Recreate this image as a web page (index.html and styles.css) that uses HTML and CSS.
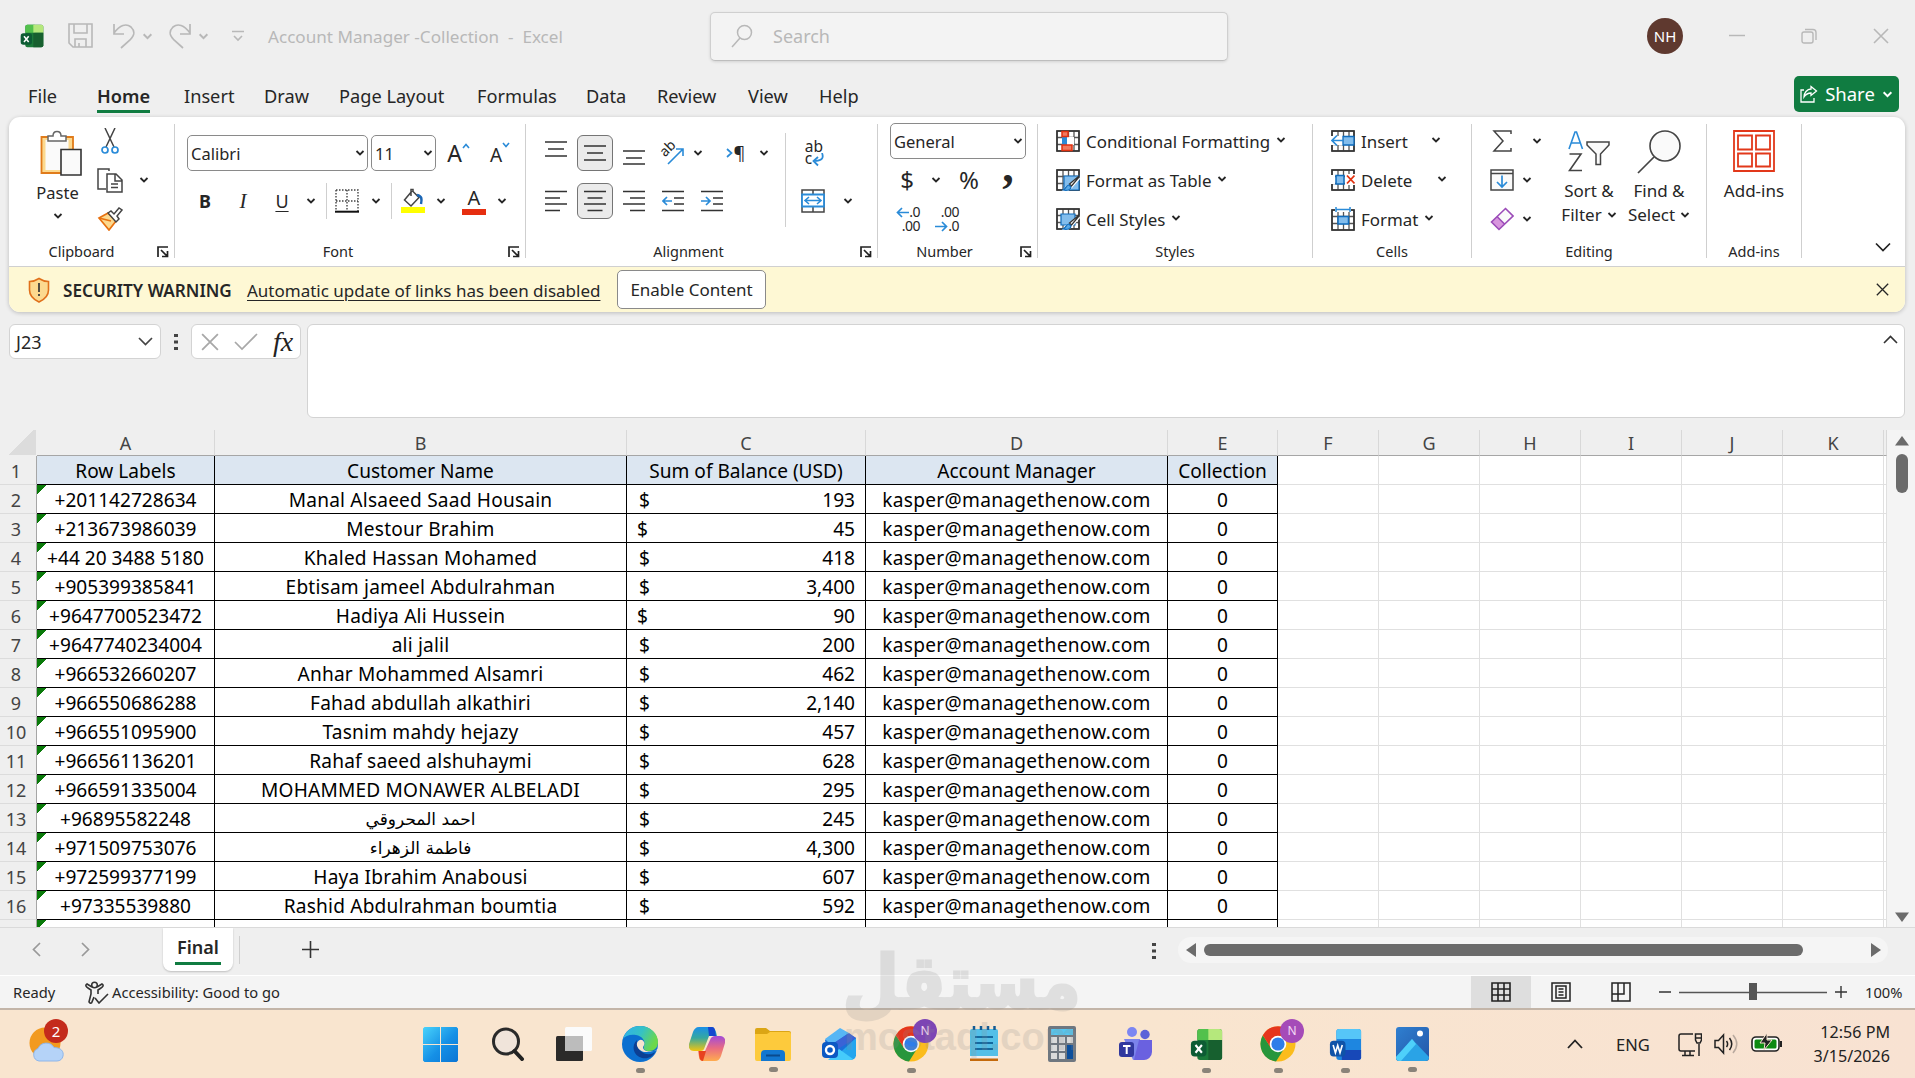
FILE: index.html
```html
<!DOCTYPE html>
<html lang="en">
<head>
    <meta charset="UTF-8">
    <meta name="viewport" content="width=device-width, initial-scale=1.0">
    <title>Account Manager -Collection - Excel</title>
    <link rel="stylesheet" href="styles.css">
</head>
<body>
    <!-- Shared icon shapes -->
    <svg class="defs" width="0" height="0">
        <defs>
            <symbol id="chev" viewBox="0 0 10 8"><path d="M1.5 2 5 5.5 8.5 2" fill="none" stroke="currentColor" stroke-width="1.8"/></symbol>
            <symbol id="launch" viewBox="0 0 12 12"><path d="M1 11V1h10M4 4l6 6M10.5 5v5.5H5" fill="none" stroke="#222" stroke-width="1.7"/></symbol>
            <symbol id="cross" viewBox="0 0 16 16"><path d="M1 1l14 14M15 1 1 15" fill="none" stroke="currentColor" stroke-width="1.6"/></symbol>
            <symbol id="grid" viewBox="0 0 24 22"><path d="M1 1h22v20H1zM1 7.5h22M1 14.5h22M7 1v20M12.5 1v20M18 1v20" fill="#fff" stroke="#555" stroke-width="1.3"/><path d="M1 1h22v20H1z" fill="none" stroke="#333" stroke-width="1.6"/></symbol>
            <symbol id="brush" viewBox="0 0 24 22"><path d="M23 7 13 16l-3 1-4 5h6l4-3 8-9z" fill="#fff"/><path d="M22.500 7.500 13.500 15l2 2 7.500-9z" fill="#fff" stroke="#333" stroke-width="1.300"/><path d="M13 16c-3 0-3 4-6 5 4 1 8 0 8-3z" fill="#5aa9e6" stroke="#0f6cbd" stroke-width="1.200"/></symbol>
            <linearGradient id="winG" x1="0" y1="0" x2="1" y2="1"><stop offset="0" stop-color="#49d3fb"/><stop offset=".55" stop-color="#1590e6"/><stop offset="1" stop-color="#0b74d4"/></linearGradient>
            <linearGradient id="edgeG" x1="0" y1="0" x2="1" y2=".4"><stop offset="0" stop-color="#2fb0ee"/><stop offset=".55" stop-color="#36c2c4"/><stop offset="1" stop-color="#6cd84a"/></linearGradient>
            <linearGradient id="copA" x1="0" y1="0" x2="0" y2="1"><stop offset="0" stop-color="#1a8fe8"/><stop offset=".45" stop-color="#35a8a0"/><stop offset="1" stop-color="#f3c50f"/></linearGradient>
            <linearGradient id="copB" x1="0" y1="0" x2="0" y2="1"><stop offset="0" stop-color="#a24ad8"/><stop offset=".5" stop-color="#ea6d80"/><stop offset="1" stop-color="#ffac4e"/></linearGradient>
            <linearGradient id="phG" x1="0" y1="0" x2="1" y2="1"><stop offset="0" stop-color="#2f7fd0"/><stop offset="1" stop-color="#2357a8"/></linearGradient>
            <symbol id="excel" viewBox="0 0 36 36">
                <rect x="8" y="1" width="27" height="34" rx="3" fill="#1b7a3a"/>
                <path d="M8 4a3 3 0 0 1 3-3h11v12H8z" fill="#52c14c"/>
                <path d="M20 1h12a3 3 0 0 1 3 3v9H20z" fill="#b5e87c"/>
                <path d="M20 13h15v19a3 3 0 0 1-3 3H20z" fill="#17602f"/>
                <rect x="1" y="14" width="17" height="17" rx="4" fill="#0d5c34"/>
                <path d="M6 18.500l7 8.500M13 18.500l-7 8.500" stroke="#fff" stroke-width="2.300"/>
            </symbol>
            <symbol id="chrome" viewBox="0 0 36 36">
                <circle cx="18" cy="18" r="17.500" fill="#fbbc1c"/>
                <path d="M2.800 9.200A17.500 17.500 0 0 0 16 35.400L24.500 22 11 22z" fill="#27963c"/>
                <path d="M2.800 9.200A17.500 17.500 0 0 1 33.200 9.200L18 10 11 22z" fill="#e5351d"/>
                <circle cx="18" cy="18" r="8.300" fill="#fff"/><circle cx="18" cy="18" r="6.600" fill="#2f7de9"/>
            </symbol>
        </defs>
    </svg>

    <header class="titlebar">
        <svg class="app-logo" width="24" height="24"><use href="#excel"/></svg>
        <svg class="t-save" width="26" height="26" viewBox="0 0 26 26"><path d="M1 1h23v23H5l-4-4zM6 1v9h13V1M7 24v-8h11v8M11 20v4" fill="none" stroke="currentColor" stroke-width="1.600"/></svg>
        <svg class="t-undo" width="24" height="26" viewBox="0 0 24 26"><path d="M2 1v10h10M2 10C8 2 14 0 19 4c5 5 3 9-1 13l-9 8" fill="none" stroke="currentColor" stroke-width="1.700"/></svg>
        <svg class="t-chev" width="11" height="9"><use href="#chev"/></svg>
        <svg class="t-redo" width="24" height="26" viewBox="0 0 24 26"><path d="M22 1v10H12M22 10C16 2 10 0 5 4c-5 5-3 9 1 13l9 8" fill="none" stroke="currentColor" stroke-width="1.700"/></svg>
        <svg class="t-chev" width="11" height="9"><use href="#chev"/></svg>
        <svg class="t-more" width="12" height="12" viewBox="0 0 12 12"><path d="M0 1.500h12M2 6l4 4 4-4" fill="none" stroke="currentColor" stroke-width="1.600"/></svg>
        <span class="doc-name">Account Manager -Collection&nbsp; -&nbsp; Excel</span>
        <div class="search">
            <svg width="22" height="24" viewBox="0 0 22 24"><circle cx="13.500" cy="8.500" r="7" fill="none" stroke="currentColor" stroke-width="1.500"/><path d="M9 14 1 23" stroke="currentColor" stroke-width="1.500"/></svg>
            <span>Search</span>
        </div>
        <div class="avatar">NH</div>
        <svg class="win-min" width="16" height="16" viewBox="0 0 16 16"><path d="M0 7.500h16" stroke="currentColor" stroke-width="1.500"/></svg>
        <svg class="win-max" width="16" height="16" viewBox="0 0 16 16"><rect x="1" y="4" width="11" height="11" rx="2" fill="none" stroke="currentColor" stroke-width="1.400"/><path d="M4 1.500h8a3 3 0 0 1 3 3V12" fill="none" stroke="currentColor" stroke-width="1.400"/></svg>
        <svg class="win-close" width="16" height="16"><use href="#cross"/></svg>
    </header>

    <nav class="tabs">
        <span>File</span><span class="active"><b>Home</b></span><span>Insert</span><span>Draw</span><span>Page Layout</span><span>Formulas</span><span>Data</span><span>Review</span><span>View</span><span>Help</span>
        <button class="share">
            <svg width="18" height="18" viewBox="0 0 18 18"><path d="M4 5H1v12h13v-4M11 1.500l5.500 4.500L11 10.500V8C8 8 6 9 4 12c0-4 3-8 7-8z" fill="none" stroke="#fff" stroke-width="1.300"/></svg>
            Share
            <svg width="11" height="9"><use href="#chev"/></svg>
        </button>
    </nav>

    <section class="panel">
        <div class="ribbon">
            <div class="group g-clipboard">
                <div class="body">
                    <div class="paste">
                        <svg width="42" height="46" viewBox="0 0 42 46"><path d="M1.500 7H33v36H1.500z" fill="#fcd98f" stroke="#e07b1a" stroke-width="1.800"/><path d="M5.500 10h23v30h-23z" fill="#fafafa"/><path d="M8 11V6h5c0-6 8-6 8 0h5v5z" fill="#fff" stroke="#666" stroke-width="1.500"/><path d="M21 19.500h20v25.500H21z" fill="#fafafa" stroke="#333" stroke-width="1.600"/></svg>
                        <span>Paste</span>
                        <svg width="10" height="8"><use href="#chev"/></svg>
                    </div>
                    <div class="clip-icons">
                        <svg width="18" height="26" viewBox="0 0 18 26"><path d="M4 0l9 19M14 0 5 19" stroke="#444" stroke-width="1.500"/><circle cx="4" cy="22" r="3" fill="none" stroke="#2a8bd8" stroke-width="1.700"/><circle cx="14" cy="22" r="3" fill="none" stroke="#2a8bd8" stroke-width="1.700"/></svg>
                        <svg width="26" height="25" viewBox="0 0 26 25"><path d="M12 3V1H1v20h8" fill="none" stroke="#444" stroke-width="1.500"/><path d="M10 6h9l6 6v12H10zM18 6v7h7M14 16h7M14 19.500h7" fill="none" stroke="#444" stroke-width="1.500"/></svg>
                        <svg width="10" height="8"><use href="#chev"/></svg>
                        <svg width="26" height="24" viewBox="0 0 26 24"><path d="M2 11 12 23l7-9-8-8z" fill="#fcd98f" stroke="#e8710f" stroke-width="1.700"/><path d="M2 11l12 3" stroke="#e8710f" stroke-width="1.500"/><path d="M11 6l3-2 3 3 5-6 3 2-5 6 2 3-3 3z" fill="#fff" stroke="#444" stroke-width="1.500"/></svg>
                    </div>
                </div>
                <div class="label">Clipboard</div><svg class="launcher" width="12" height="12"><use href="#launch"/></svg>
            </div>

            <div class="group g-font">
                <div class="body two-row">
                    <div class="row font-top">
                        <div class="combo">Calibri<svg width="10" height="8"><use href="#chev"/></svg></div>
                        <div class="combo">11<svg width="10" height="8"><use href="#chev"/></svg></div>
                        <span class="grow">A<svg width="8" height="6" viewBox="0 0 8 6"><path d="M1 5l3-3.500L7 5" fill="none" stroke="#2a8bd8" stroke-width="1.600"/></svg></span>
                        <span class="shrink">A<svg width="8" height="6" viewBox="0 0 8 6"><path d="M1 1l3 3.500L7 1" fill="none" stroke="#2a8bd8" stroke-width="1.600"/></svg></span>
                    </div>
                    <div class="row font-bottom">
                        <b>B</b><i>I</i><u>U</u>
                        <svg width="10" height="8"><use href="#chev"/></svg>
                        <span class="vsep"></span>
                        <svg width="24" height="24" viewBox="0 0 24 24"><path d="M1 1h22v21M1 1v21M12 1v21M1 12h22" fill="none" stroke="#444" stroke-width="1.400" stroke-dasharray="1.500 1.500"/><path d="M0 22.700h24" stroke="#111" stroke-width="2"/></svg>
                        <svg width="10" height="8"><use href="#chev"/></svg>
                        <span class="vsep"></span>
                        <svg width="26" height="26" viewBox="0 0 26 26"><path d="M12 3 4.500 12l6.500 6 8-8.500-6-6V1.500h-2V8" fill="none" stroke="#444" stroke-width="1.500"/><path d="M17 7c5 1 5 4 4 9" fill="none" stroke="#1b66b5" stroke-width="2.500"/><path d="M1 19h24v6H1z" fill="#ff0"/></svg>
                        <svg width="10" height="8"><use href="#chev"/></svg>
                        <span class="font-color">A</span>
                        <svg width="10" height="8"><use href="#chev"/></svg>
                    </div>
                </div>
                <div class="label">Font</div><svg class="launcher" width="12" height="12"><use href="#launch"/></svg>
            </div>

            <div class="group g-align">
                <div class="body">
                    <div class="align-left two-row">
                        <div class="row al-top">
                            <svg width="22" height="24" viewBox="0 0 22 24"><path d="M0 1h22M3 8h16M0 15h22" stroke="#333" stroke-width="1.600"/></svg>
                            <span class="pressed"><svg width="22" height="24" viewBox="0 0 22 24"><path d="M0 5h22M3 12h16M0 19h22" stroke="#333" stroke-width="1.600"/></svg></span>
                            <svg width="22" height="24" viewBox="0 0 22 24"><path d="M0 10h22M3 17h16M0 23h22" stroke="#333" stroke-width="1.600"/></svg>
                            <span class="orient"><span>ab</span><svg width="18" height="18" viewBox="0 0 18 18"><path d="M1 17 16 2M9 2h7v7" fill="none" stroke="#2a8bd8" stroke-width="1.600"/></svg></span>
                            <svg width="10" height="8"><use href="#chev"/></svg>
                            <span class="pilcrow"><svg width="7" height="10" viewBox="0 0 7 10"><path d="M1 1l4.500 4L1 9" fill="none" stroke="#2a8bd8" stroke-width="1.700"/></svg>¶</span>
                            <svg width="10" height="8"><use href="#chev"/></svg>
                        </div>
                        <div class="row al-bottom">
                            <svg width="22" height="22" viewBox="0 0 22 22"><path d="M0 1.500h22M0 8h15M0 14h22M0 20.500h15" stroke="#333" stroke-width="1.600"/></svg>
                            <span class="pressed"><svg width="22" height="22" viewBox="0 0 22 22"><path d="M0 1.500h22M3.500 8h15M0 14h22M3.500 20.500h15" stroke="#333" stroke-width="1.600"/></svg></span>
                            <svg width="22" height="22" viewBox="0 0 22 22"><path d="M0 1.500h22M7 8h15M0 14h22M7 20.500h15" stroke="#333" stroke-width="1.600"/></svg>
                            <svg width="22" height="22" viewBox="0 0 22 22"><path d="M0 1.500h22M12 8h10M12 14h10M0 20.500h22" stroke="#333" stroke-width="1.600"/><path d="M10 11H1M5 7l-4 4 4 4" fill="none" stroke="#2a8bd8" stroke-width="1.700"/></svg>
                            <svg width="22" height="22" viewBox="0 0 22 22"><path d="M0 1.500h22M12 8h10M12 14h10M0 20.500h22" stroke="#333" stroke-width="1.600"/><path d="M0 11h9M5 7l4 4-4 4" fill="none" stroke="#2a8bd8" stroke-width="1.700"/></svg>
                        </div>
                    </div>
                    <div class="align-right two-row">
                        <div class="row"><span class="wrap-text">ab<br>c<svg width="12" height="14" viewBox="0 0 12 14"><path d="M10 0c2 5 0 8-8 8M6 4 1.500 8 6 12.500" fill="none" stroke="#2a8bd8" stroke-width="1.800"/></svg></span></div>
                        <div class="row">
                            <svg width="24" height="24" viewBox="0 0 24 24"><path d="M1 1h22v22H1zM12 1v22" fill="#fff" stroke="#444" stroke-width="1.500"/><path d="M1 5.500h22v12H1z" fill="#fff" stroke="#2a8bd8" stroke-width="1.800"/><path d="M4 11.500h16M8 8l-4 3.500L8 15M16 8l4 3.500-4 3.500" fill="none" stroke="#2a8bd8" stroke-width="1.600"/></svg>
                            <svg width="10" height="8"><use href="#chev"/></svg>
                        </div>
                    </div>
                </div>
                <div class="label">Alignment</div><svg class="launcher" width="12" height="12"><use href="#launch"/></svg>
            </div>

            <div class="group g-number">
                <div class="body three-row">
                    <div class="combo">General<svg width="10" height="8"><use href="#chev"/></svg></div>
                    <div class="row num-mid"><span>$</span><svg width="10" height="8"><use href="#chev"/></svg><span>%</span><span class="comma">,</span></div>
                    <div class="row num-dec">
                        <span class="dec"><span><svg width="13" height="11" viewBox="0 0 13 11"><path d="M13 5.500H1.500M6 1 1.500 5.500 6 10" fill="none" stroke="#2a8bd8" stroke-width="1.700"/></svg>.0</span><span>.00</span></span>
                        <span class="dec"><span>.00</span><span><svg width="13" height="11" viewBox="0 0 13 11"><path d="M0 5.500h11.500M7 1l4.500 4.500L7 10" fill="none" stroke="#2a8bd8" stroke-width="1.700"/></svg>.0</span></span>
                    </div>
                </div>
                <div class="label">Number</div><svg class="launcher" width="12" height="12"><use href="#launch"/></svg>
            </div>

            <div class="group g-styles">
                <div class="body three-row">
                    <div class="cmd"><svg width="24" height="22" viewBox="0 0 24 22"><use href="#grid" width="24" height="22"/><path d="M6 7h5v8H6z" fill="#2a8bd8"/><path d="M11 7h7v8h-7z" fill="#fff"/><path d="M6 1.500h6v5H6zM6 15h10v5.500H6z" fill="#f07a5f" stroke="#e2310f" stroke-width="1.500"/></svg>Conditional Formatting<svg width="10" height="8"><use href="#chev"/></svg></div>
                    <div class="cmd"><svg width="24" height="22" viewBox="0 0 24 22"><use href="#grid" width="24" height="22"/><path d="M8 7h15v14H8z" fill="#83bdec" stroke="#0f6cbd" stroke-width="1.200"/><use href="#brush" width="24" height="22"/></svg>Format as Table<svg width="10" height="8"><use href="#chev"/></svg></div>
                    <div class="cmd"><svg width="24" height="22" viewBox="0 0 24 22"><use href="#grid" width="24" height="22"/><path d="M5 6h14v11H5z" fill="#83bdec" stroke="#0f6cbd" stroke-width="1.200"/><use href="#brush" width="24" height="22"/></svg>Cell Styles<svg width="10" height="8"><use href="#chev"/></svg></div>
                </div>
                <div class="label">Styles</div>
            </div>

            <div class="group g-cells">
                <div class="body three-row">
                    <div class="cmd"><svg width="24" height="22" viewBox="0 0 24 22"><use href="#grid" width="24" height="22"/><path d="M0 6h12v9H0z" fill="#fff"/><path d="M12 6.500h11v8.500H12z" fill="#83bdec" stroke="#0f6cbd" stroke-width="1.300"/><path d="M12 10.500H1.500M6 5.500l-5 5 5 5" fill="none" stroke="#2a8bd8" stroke-width="1.700"/></svg><span class="ins">Insert</span><svg width="10" height="8"><use href="#chev"/></svg></div>
                    <div class="cmd"><svg width="24" height="22" viewBox="0 0 24 22"><use href="#grid" width="24" height="22"/><path d="M0 6h4v9H0zM14 5h10v11H14z" fill="#fff"/><path d="M5 6.500h8v8.500H5z" fill="#83bdec" stroke="#0f6cbd" stroke-width="1.500"/><path d="M16 6.500l7.500 8M23.500 6.500l-7.500 8" stroke="#e2310f" stroke-width="1.800"/></svg><span class="del">Delete</span><svg width="10" height="8"><use href="#chev"/></svg></div>
                    <div class="cmd"><svg width="24" height="24" viewBox="0 0 24 24"><use href="#grid" y="2" width="24" height="22"/><path d="M4 0h16v5H4z" fill="#fff"/><path d="M5 2.500h14M5 0v5M19 0v5" fill="none" stroke="#2a8bd8" stroke-width="1.500"/><path d="M7 9.500h10.500v7.500H7z" fill="#83bdec" stroke="#0f6cbd" stroke-width="1.500"/></svg>Format<svg width="10" height="8"><use href="#chev"/></svg></div>
                </div>
                <div class="label">Cells</div>
            </div>

            <div class="group g-editing">
                <div class="body">
                    <div class="edit-icons three-row">
                        <div><svg width="24" height="22" viewBox="0 0 24 22"><path d="M21 4V1H4l9 10-9 10h17v-3" fill="none" stroke="#444" stroke-width="1.500"/></svg><svg class="far" width="10" height="8"><use href="#chev"/></svg></div>
                        <div><svg width="24" height="22" viewBox="0 0 24 22"><path d="M1 1h22v20H1zM1 4.500h22" fill="#fafafa" stroke="#444" stroke-width="1.500"/><path d="M12 6.500v11M7 13l5 5 5-5" fill="none" stroke="#2a8bd8" stroke-width="1.700"/></svg><svg width="10" height="8"><use href="#chev"/></svg></div>
                        <div><svg width="24" height="24" viewBox="0 0 24 24"><path d="M15.500 1.500 23 9 9 22.500 1.500 15z" fill="#fafafa"/><path d="M7 9.500 14.500 17 9 22.500 1.500 15z" fill="#d896de"/><path d="M15.500 1.500 23 9 9 22.500 1.500 15zM7 9.500l7.500 7.500" fill="none" stroke="#9b4bb8" stroke-width="1.600"/></svg><svg width="10" height="8"><use href="#chev"/></svg></div>
                    </div>
                    <div class="big sort">
                        <svg width="42" height="46" viewBox="0 0 42 46"><path d="M1 19 7 2h1.500L14.500 19M3.500 13h8.500" fill="none" stroke="#2a8bd8" stroke-width="1.600"/><path d="M1.500 24H13L1.500 40.500H14" fill="none" stroke="#444" stroke-width="1.600"/><path d="M19 12h22v3l-8.500 9v10.500H28V24l-9-9z" fill="#fafafa" stroke="#444" stroke-width="1.500"/></svg>
                        <span>Sort &amp;</span><span>Filter <svg width="10" height="8"><use href="#chev"/></svg></span>
                    </div>
                    <div class="big find">
                        <svg width="44" height="46" viewBox="0 0 44 46"><circle cx="28" cy="16" r="15" fill="#fafafa" stroke="#444" stroke-width="1.600"/><path d="M17 27 1 43" stroke="#444" stroke-width="1.700"/></svg>
                        <span>Find &amp;</span><span>Select <svg width="10" height="8"><use href="#chev"/></svg></span>
                    </div>
                </div>
                <div class="label">Editing</div>
            </div>

            <div class="group g-addins">
                <div class="body">
                    <div class="big">
                        <svg width="42" height="46" viewBox="0 0 42 46"><path d="M1 1h40v40H1zM5 5.500h14v14H5zM23 5.500h14v14H23zM5 23.500h14v13H5zM23 23.500h14v13H23z" fill="#fff" stroke="#e2381a" stroke-width="1.800"/></svg>
                        <span>Add-ins</span>
                    </div>
                </div>
                <div class="label">Add-ins</div>
            </div>

            <svg class="collapse" width="16" height="10" viewBox="0 0 16 10"><path d="M1 1.500 8 8.500l7-7" fill="none" stroke="#222" stroke-width="1.700"/></svg>
        </div>

        <div class="warning">
            <svg width="22" height="26" viewBox="0 0 22 26"><path d="M11 1.500c3 2 6 3 9.500 3V13c0 6-4 9.500-9.500 12C5.500 22.500 1.500 19 1.500 13V4.500c3.500 0 6.500-1 9.500-3z" fill="#fcd98f" stroke="#e0701a" stroke-width="1.600"/><path d="M11 6v9M11 17v2" stroke="#333" stroke-width="1.700"/></svg>
            <b>SECURITY WARNING</b>
            <u>Automatic update of links has been disabled</u>
            <button>Enable Content</button>
            <svg class="dismiss" width="13" height="13"><use href="#cross"/></svg>
        </div>
    </section>

    <section class="formula">
        <div class="name-box">J23<svg width="15" height="9" viewBox="0 0 15 9"><path d="M1 1l6.500 6.500L14 1" fill="none" stroke="#444" stroke-width="1.700"/></svg></div>
        <svg class="dots" width="4" height="16" viewBox="0 0 4 16"><path d="M0 0h4v3H0zM0 6.500h4v3H0zM0 13h4v3H0z" fill="#444"/></svg>
        <div class="fx-box">
            <svg width="18" height="18" viewBox="0 0 16 16"><use href="#cross"/></svg>
            <svg width="24" height="18" viewBox="0 0 24 18"><path d="M1 9l7 7L23 1" fill="none" stroke="currentColor" stroke-width="1.700"/></svg>
            <i>fx</i>
        </div>
        <div class="fx-input"><svg width="15" height="9" viewBox="0 0 15 9"><path d="M1 8l6.500-6.500L14 8" fill="none" stroke="#333" stroke-width="1.600"/></svg></div>
    </section>

    <main class="sheet">
        <table>
            <colgroup>
                <col class="c-head"><col class="c-a"><col class="c-b"><col class="c-c"><col class="c-d"><col class="c-e">
                <col class="c-x"><col class="c-x"><col class="c-x"><col class="c-x"><col class="c-x"><col class="c-x"><col class="c-end">
            </colgroup>
            <thead>
                <tr><th class="corner"></th><th>A</th><th>B</th><th>C</th><th>D</th><th>E</th><th>F</th><th>G</th><th>H</th><th>I</th><th>J</th><th>K</th><th></th></tr>
            </thead>
            <tbody id="rows"></tbody>
        </table>
        <div class="vscroll">
            <svg width="14" height="10" viewBox="0 0 14 10"><path d="M7 0l7 9.500H0z" fill="#6b6b6b"/></svg>
            <div class="vthumb"></div>
            <svg width="14" height="10" viewBox="0 0 14 10"><path d="M7 10 0 .5h14z" fill="#6b6b6b"/></svg>
        </div>
    </main>

    <section class="sheet-tabs">
        <svg class="st-prev" width="9" height="15" viewBox="0 0 9 15"><path d="M8 1 1.500 7.500 8 14" fill="none" stroke="#999" stroke-width="1.700"/></svg>
        <svg class="st-next" width="9" height="15" viewBox="0 0 9 15"><path d="M1 1l6.500 6.500L1 14" fill="none" stroke="#999" stroke-width="1.700"/></svg>
        <div class="sheet-tab"><b>Final</b></div>
        <span class="tab-sep"></span>
        <svg class="st-add" width="17" height="17" viewBox="0 0 17 17"><path d="M8.500 0v17M0 8.500h17" stroke="#333" stroke-width="1.600"/></svg>
        <svg class="st-dots" width="4" height="16" viewBox="0 0 4 16"><path d="M0 0h4v3H0zM0 6.500h4v3H0zM0 13h4v3H0z" fill="#444"/></svg>
        <div class="hscroll">
            <svg width="10" height="14" viewBox="0 0 10 14"><path d="M0 7 10 0v14z" fill="#6b6b6b"/></svg>
            <div class="hthumb"></div>
            <svg width="10" height="14" viewBox="0 0 10 14"><path d="M10 7 0 0v14z" fill="#6b6b6b"/></svg>
        </div>
    </section>

    <footer class="status">
        <span class="ready">Ready</span>
        <svg width="24" height="23" viewBox="0 0 24 23"><circle cx="9.500" cy="4" r="2.800" fill="none" stroke="#333" stroke-width="1.500"/><path d="M7 6 2 3C0 4 1 6 3 7l3 2v4l-2 8c1 2 3 1 3 0l2-5M12 6l5-3c2 1 1 3-1 4l-3 2v4M10 17l4 5 9-9" fill="none" stroke="#333" stroke-width="1.600"/></svg>
        <span class="access">Accessibility: Good to go</span>
        <div class="view on"><svg width="20" height="20" viewBox="0 0 20 20"><path d="M1 1h18v18H1zM1 7h18M1 13h18M7 1v18M13 1v18" fill="none" stroke="#222" stroke-width="1.600"/></svg></div>
        <div class="view"><svg width="20" height="20" viewBox="0 0 20 20"><path d="M1 1h18v18H1zM5 4h10v12H5zM7.500 7h5M7.500 10h5M7.500 13h5" fill="none" stroke="#222" stroke-width="1.500"/></svg></div>
        <div class="view"><svg width="20" height="20" viewBox="0 0 20 20"><path d="M1 1h18v18H1zM7 1v11M13 1v11H1M13 12H7v7" fill="none" stroke="#222" stroke-width="1.500"/></svg></div>
        <svg class="zoom" width="188" height="18" viewBox="0 0 188 18"><path d="M0 9h12M176 9h12M182 3v12" stroke="#333" stroke-width="1.400"/><path d="M20 9.500h148" stroke="#555" stroke-width="1.600"/><path d="M90 0h8v17h-8z" fill="#555"/></svg>
        <span class="pct">100%</span>
    </footer>

    <section class="taskbar">
        <div class="weather">
            <svg width="36" height="36" viewBox="0 0 36 36"><circle cx="16" cy="17" r="15.500" fill="#f29a1f"/><path d="M10 35a6.500 6.500 0 0 1-1-12.500 9 9 0 0 1 16-1c7 0 10 4 9 8.500-.5 3-3 5-6 5z" fill="#b5d3f8" stroke="#8fb6ea"/></svg>
            <span class="badge">2</span>
        </div>
        <div class="apps">
            <div><svg width="35" height="35" viewBox="0 0 35 35"><path d="M1.500 0H17v17H0V1.500zM18 0h15.500L35 1.500V17H18zM0 18h17v17H1.500L0 33.500zM18 18h17v15.500L33.500 35H18z" fill="url(#winG)"/></svg></div>
            <div><svg width="34" height="34" viewBox="0 0 34 34"><circle cx="15" cy="14.500" r="12.500" fill="#f0e4da" stroke="#2a2a2a" stroke-width="3"/><path d="M23.500 24l7.500 8" stroke="#222" stroke-width="4" stroke-linecap="round"/></svg></div>
            <div><svg width="36" height="34" viewBox="0 0 36 34"><rect y="9" width="27" height="25" rx="1.500" fill="#2b2a29"/><rect x="9" width="27" height="24" rx="1.500" fill="#fbfbfb"/><path d="M9 9h18v15H9z" fill="#bcbcbc"/></svg></div>
            <div class="run"><svg width="36" height="36" viewBox="0 0 36 36"><circle cx="18" cy="18" r="18" fill="#0b6fd0"/><path d="M1 13C4 4 10 0 18 0c10 0 18 7 18 16 0 6-4 9-9 9-4 0-6-2-5-5 2-5-2-10-8-11C8 8 3 10 1 13z" fill="url(#edgeG)"/><path d="M15 14c-6 5-4 16 5 18 6 1 11-1 13-6-4 3-9 3-13 0-3-2-6-6-5-12z" fill="#0c3f93"/><path d="M15 17c1-3 5-5 7-1 1 2 0 3-1 5 0 3 3 6 15 3v-1c-5 3-10 3-14 3-4-1-8-5-7-9z" fill="#f7e4d0"/></svg></div>
            <div><svg width="36" height="34" viewBox="0 0 36 34"><path d="M10 0h12c3 0 4 2 5 5l1 4h-8l-5 13c-1 2-3 2-5 2H5c-4 0-6-3-5-7l4-12c1-3 3-5 6-5z" fill="url(#copA)"/><path d="M26 34H14c-3 0-4-2-4-4l-1-6h7l5-11c1-3 3-4 5-4h5c4 0 6 3 5 7l-4 13c-1 3-3 5-6 5z" fill="url(#copB)"/><path d="M19 0h4c3 0 3 3 4 9h-7z" fill="#1447cf"/><path d="M10 24h7l-3 10c-3 0-4-3-4-10z" fill="#e8421f"/></svg></div>
            <div class="run"><svg width="36" height="33" viewBox="0 0 36 33"><path d="M0 2a2 2 0 0 1 2-2h9l4 3h19a2 2 0 0 1 2 2v5H0z" fill="#dba514"/><path d="M0 6h12l3-2h19a2 2 0 0 1 2 2v25a2 2 0 0 1-2 2H2a2 2 0 0 1-2-2z" fill="#fdca3c"/><path d="M6 33v-7a4 4 0 0 1 4-4h16a4 4 0 0 1 4 4v7z" fill="#1277d0"/><path d="M11 27.500h14" stroke="#0a4a8d" stroke-width="2"/></svg></div>
            <div><svg width="36" height="34" viewBox="0 0 36 34"><path d="M3 13 18 2l16 9v18H6z" fill="#1b6fd9"/><path d="M3 12 18 1l9 5L9 18z" fill="#57b6f5"/><path d="M34 11v17a5 5 0 0 1-5 5H10z" fill="#24a5ee"/><path d="M34 11 16 22l-7-4 18-12z" fill="#3a63d6"/><path d="M6 33 17 22l14 10a5 5 0 0 1-2 1z" fill="#45cbfb"/><rect y="15" width="16" height="16" rx="4" fill="#0c59c4"/><circle cx="8" cy="23" r="4" fill="none" stroke="#fff" stroke-width="2.400"/></svg></div>
            <div class="run"><svg width="36" height="36"><use href="#chrome"/></svg><span class="who dim">N</span></div>
            <div><svg width="28" height="36" viewBox="0 0 28 36"><rect y="3" width="28" height="29" rx="2" fill="#53bfe8"/><path d="M4 0v4M11 0v4M18 0v4M24.500 0v4" stroke="#155b92" stroke-width="2.500"/><path d="M5 11h18M5 17h18M5 23h18" stroke="#14699f" stroke-width="1.800"/><path d="M0 30h28v3H0z" fill="#eee"/><path d="M0 32.500h28V35H0z" fill="#c4690b"/></svg></div>
            <div><svg width="28" height="36" viewBox="0 0 28 36"><rect width="28" height="36" rx="2" fill="#6f7780"/><path d="M3 3h22v6H3z" fill="#55c7f1"/><path d="M3 11h6v6H3zM11 11h6v6h-6zM19 11h6v6h-6zM3 19h6v6H3zM11 19h6v6h-6zM3 27h6v6H3zM11 27h6v6h-6z" fill="#dadada"/><path d="M19 19h6v14h-6z" fill="#0d4f9c"/></svg></div>
            <div><svg width="34" height="34" viewBox="0 0 34 34"><circle cx="13" cy="5" r="5" fill="#7c86f2"/><circle cx="26" cy="7.500" r="4.700" fill="#5d63d8"/><path d="M5 12h16v14a7 7 0 0 1-7 7z" fill="#7b83eb"/><path d="M20 13h13v12a8 8 0 0 1-9 8h-9z" fill="#6a61e0"/><rect y="15" width="15" height="15" rx="3" fill="#31389e"/><path d="M4 19h7.500M7.700 19v8" stroke="#fff" stroke-width="2"/></svg></div>
            <div class="run"><svg width="33" height="35" viewBox="0 0 36 36"><use href="#excel"/></svg></div>
            <div class="run"><svg width="36" height="36"><use href="#chrome"/></svg><span class="who">N</span></div>
            <div class="run"><svg width="33" height="35" viewBox="0 0 36 36"><rect x="8" y="1" width="27" height="34" rx="3" fill="#1e86e0"/><path d="M8 4a3 3 0 0 1 3-3h21a3 3 0 0 1 3 3v8H8z" fill="#56c6f8"/><path d="M14 24h21v8a3 3 0 0 1-3 3H14z" fill="#1748b8"/><rect x="1" y="14" width="17" height="17" rx="4" fill="#0f53a8"/><path d="M4.500 18.500 7 27l2.500-8 2.500 8 2.500-8.500" fill="none" stroke="#fff" stroke-width="1.800"/></svg></div>
            <div class="run"><svg width="33" height="34" viewBox="0 0 33 34"><rect width="33" height="34" rx="3" fill="url(#phG)"/><path d="M0 30 16 12l17 18a4 4 0 0 1-4 4H4a4 4 0 0 1-4-4z" fill="#2aa3e6"/><path d="M5 34 20 17l-4-5L0 30a4 4 0 0 0 4 4z" fill="#4ed0fa"/><circle cx="24" cy="6.500" r="3" fill="#fff"/></svg></div>
        </div>
        <svg class="tray-up" width="16" height="10" viewBox="0 0 16 10"><path d="M1 9l7-7.500L15 9" fill="none" stroke="#222" stroke-width="1.800"/></svg>
        <span class="lang">ENG</span>
        <svg class="tray-net" width="24" height="25" viewBox="0 0 24 25"><path d="M15 2H3a2 2 0 0 0-2 2v13a2 2 0 0 0 2 2h14M7 19v4M12 19v4M4 23.500h12M21 12v12M17.500 2h6v6l-1.500 3h-3l-1.500-3zM17.500 6h6" fill="none" stroke="#222" stroke-width="1.500"/></svg>
        <svg class="tray-vol" width="24" height="22" viewBox="0 0 24 22"><path d="M1 7.500h3.500L9.500 2v18l-5-5.500H1zM12.500 8c1.500 2 1.500 4 0 6" fill="none" stroke="#222" stroke-width="1.500"/><path d="M15.500 5c3 4 3 8 0 12" fill="none" stroke="#222" stroke-width="1.500"/><path d="M19 2c5 6 5 12 0 18" fill="none" stroke="#b9aa9f" stroke-width="1.500"/></svg>
        <svg class="tray-bat" width="32" height="22" viewBox="0 0 32 22"><rect x="1" y="4" width="27" height="14" rx="4" fill="#fff" stroke="#222" stroke-width="1.600"/><rect x="3.500" y="6.500" width="22" height="9" rx="1.500" fill="#0e8a12"/><path d="M30 8v6" stroke="#222" stroke-width="2"/><path d="M16 0 9 10h5l-1 7 8-10h-5z" fill="#222" stroke="#f9e5d2" stroke-width="1"/></svg>
        <div class="clock"><span>12:56 PM</span><span>3/15/2026</span></div>
    </section>

    <div class="watermark"><span class="wm-ar" lang="ar">مستقل</span><span class="wm-en">mostaql.com</span></div>

    <script>
        // phone, customer, balance
        const customers = [
            ["+201142728634", "Manal Alsaeed Saad Housain", "193"],
            ["+213673986039", "Mestour Brahim", "45"],
            ["+44 20 3488 5180", "Khaled Hassan Mohamed", "418"],
            ["+905399385841", "Ebtisam jameel Abdulrahman", "3,400"],
            ["+9647700523472", "Hadiya Ali Hussein", "90"],
            ["+9647740234004", "ali jalil", "200"],
            ["+966532660207", "Anhar Mohammed Alsamri", "462"],
            ["+966550686288", "Fahad abdullah alkathiri", "2,140"],
            ["+966551095900", "Tasnim mahdy hejazy", "457"],
            ["+966561136201", "Rahaf saeed alshuhaymi", "628"],
            ["+966591335004", "MOHAMMED MONAWER ALBELADI", "295"],
            ["+96895582248", "احمد المحروقي", "245"],
            ["+971509753076", "فاطمة الزهراء", "4,300"],
            ["+972599377199", "Haya Ibrahim Anabousi", "607"],
            ["+97335539880", "Rashid Abdulrahman boumtia", "592"],
            ["", "عبدالله", ""]
        ];
        const blanks = "<td></td>".repeat(7);

        let html = `<tr class="titles"><th>1</th><td>Row Labels</td><td>Customer Name</td><td>Sum of Balance (USD)</td><td>Account Manager</td><td>Collection</td>${blanks}</tr>`;
        customers.forEach(([phone, name, sum], i) => {
            const arabic = /[\u0600-\u06ff]/.test(name) ? "arabic" : "name";
            const last = i === customers.length - 1;
            const money = `<div class="money${sum.length === 2 ? " short" : ""}"><span>$</span><span>${sum}</span></div>`;
            html += `<tr class="data"><th>${last ? "" : i + 2}</th><td class="flag">${phone}</td><td class="${arabic}">${name}</td>`
                + `<td>${money}</td><td class="email">${last ? "" : "kasper@managethenow.com"}</td><td>${last ? "" : "0"}</td>${blanks}</tr>`;
        });
        document.getElementById("rows").innerHTML = html;
    </script>
</body>
</html>
```
FILE: styles.css
```css
* {
    box-sizing: border-box;
}
body {
    margin: 0;
    width: 1915px;
    height: 1078px;
    overflow: hidden;
    position: relative;
    display: flex;
    flex-direction: column;
    background: #efefef;
    color: #262626;
    font-family: "Noto Sans", "DejaVu Sans", sans-serif;
    font-size: 17px;
    white-space: nowrap;
}
svg {
    display: block;
    flex: none;
}
.defs {
    position: absolute;
}
button {
    font: inherit;
    color: inherit;
    white-space: nowrap;
}

/* Title bar */
.titlebar {
    flex: none;
    height: 72px;
    display: flex;
    align-items: center;
    color: #b8b8b8;
}
.app-logo { margin-left: 20px; }
.t-save { margin-left: 24px; }
.t-undo { margin-left: 18px; }
.t-chev { margin-left: 6px; }
.t-redo { margin-left: 15px; }
.t-more { margin-left: 23px; }
.doc-name {
    width: 442px;
    margin-left: 24px;
    font-size: 17.100px;
}
.search {
    width: 518px;
    height: 49px;
    display: flex;
    align-items: center;
    gap: 20px;
    padding-left: 20px;
    border: 1px solid #cfcfcf;
    border-bottom-color: #bdbdbd;
    border-radius: 5px;
    background: #f3f3f3;
    box-shadow: 0 1px 3px rgba(0, 0, 0, .12);
    font-size: 18px;
}
.avatar {
    width: 36px;
    height: 36px;
    margin-left: 419px;
    border-radius: 50%;
    background: #5f392f;
    color: #fff;
    font-size: 15px;
    line-height: 36px;
    text-align: center;
}
.win-min { margin-left: 46px; }
.win-max { margin-left: 56px; }
.win-close { margin-left: 56px; }

/* Ribbon tabs */
.tabs {
    flex: none;
    height: 45px;
    display: grid;
    grid-template-columns: 69px 87px 80px 75px 138px 109px 71px 91px 71px 975px 105px;
    padding: 4px 0 0 28px;
    font-size: 18.200px;
    line-height: 40px;
}
.tabs .active b {
    display: inline-block;
    height: 37px;
    border-bottom: 3px solid #107c41;
    font-weight: 600;
}
.share {
    height: 36px;
    display: flex;
    align-items: center;
    justify-content: space-between;
    padding: 0 6px;
    border: 0;
    border-radius: 5px;
    background: #107c41;
    color: #fff;
    font-size: 18.500px;
}

/* Ribbon */
.panel {
    flex: none;
    height: 195px;
    margin: 0 10px 0 9px;
    border-radius: 11px;
    background: #fff;
    box-shadow: 0 1px 4px rgba(0, 0, 0, .22);
}
.ribbon {
    height: 150px;
    display: flex;
    padding-top: 7px;
    border-bottom: 1px solid #d0d0d0;
}
.group {
    height: 134px;
    position: relative;
    border-right: 1px solid #cfcfcf;
}
.group .body {
    height: 117px;
    display: flex;
}
.label {
    font-size: 14.500px;
    line-height: 20px;
    text-align: center;
}
.launcher {
    position: absolute;
    right: 5px;
    bottom: 0;
}
.g-clipboard { width: 166px; }
.g-clipboard .label { padding-right: 20px; }
.g-font { width: 351px; }
.g-font .label { padding-right: 24px; }
.g-align { width: 352px; }
.g-align .label { padding-right: 26px; }
.g-number { width: 160px; }
.g-number .label { padding-right: 26px; }
.g-styles { width: 275px; }
.g-cells { width: 159px; }
.g-editing { width: 235px; }
.g-addins { width: 95px; }

.paste {
    width: 81px;
    margin-left: 8px;
    padding-top: 6px;
    display: flex;
    flex-direction: column;
    align-items: center;
    font-size: 16.500px;
}
.paste svg:first-child { margin-left: 7px; }
.paste span { line-height: 34px; }
.paste svg:last-child { margin-top: 2px; }
.clip-icons {
    display: grid;
    grid-template-columns: 24px 44px;
    grid-template-rows: 34px 44px 34px;
    align-items: center;
    justify-items: center;
}
.clip-icons svg:first-child { grid-column: 1 / 2; }
.clip-icons svg:nth-child(2) { grid-area: 2 / 1; }
.clip-icons svg:nth-child(3) { grid-area: 2 / 2; }
.clip-icons svg:nth-child(4) { grid-area: 3 / 1; }

.row {
    height: 36px;
    display: grid;
    align-items: center;
    justify-items: center;
}
.group .body.two-row,
.two-row {
    display: flex;
    flex-direction: column;
    gap: 12px;
    padding-top: 11px;
}
.group .body.three-row,
.three-row {
    display: grid;
    grid-template-rows: 34px 44px 34px;
    align-items: center;
}
.combo {
    width: 100%;
    height: 36px;
    display: flex;
    align-items: center;
    justify-content: space-between;
    padding: 0 2px 0 3px;
    border: 1px solid #8a8a8a;
    border-radius: 5px;
    background: #fff;
    font-size: 16.500px;
}
.g-font .body { padding-left: 12px; }
.font-top {
    grid-template-columns: 181px 3px 65px 45px 38px;
}
.font-top .combo:nth-child(2) { grid-column: 3; }
.grow,
.shrink {
    display: flex;
    align-items: flex-start;
    font-size: 23px;
    line-height: 30px;
}
.shrink { font-size: 19px; padding-top: 3px; }
.grow svg { margin-top: 5px; }
.shrink svg { margin-top: 2px; }
.font-bottom {
    grid-template-columns: 36px 40px 38px 20px 10px 32px 26px 4px 40px 16px 50px 6px;
    font-size: 18px;
    line-height: 24px;
}
.font-bottom i {
    font-family: "Liberation Serif", serif;
    font-size: 21px;
}
.font-bottom u { text-underline-offset: 3px; }
.vsep {
    width: 1px;
    height: 36px;
    background: #cfcfcf;
}
.font-color {
    width: 24px;
    height: 27px;
    border-bottom: 6px solid #e62e10;
    font-size: 20px;
    line-height: 19px;
    text-align: center;
}

.g-align .body { padding-left: 11px; }
.align-left {
    width: 249px;
}
.al-top { grid-template-columns: 38px 40px 38px 36px 18px 50px 14px; }
.al-bottom { grid-template-columns: 38px 40px 38px 40px 38px; }
.pressed {
    width: 36px;
    height: 36px;
    display: flex;
    align-items: center;
    justify-content: center;
    border: 1px solid #757575;
    border-radius: 6px;
    background: #ebebeb;
}
.orient {
    width: 24px;
    height: 24px;
    display: grid;
    font-size: 14px;
    line-height: 14px;
}
.orient > * { grid-area: 1 / 1; }
.orient span {
    width: 17px;
    height: 14px;
    transform: rotate(-45deg);
}
.orient svg { margin: 6px 0 0 8px; }
.pilcrow {
    display: flex;
    align-items: center;
    gap: 1px;
    margin-left: 7px;
    font-size: 18px;
}
.align-right {
    width: 75px;
    position: relative;
}
.align-right::before {
    content: "";
    position: absolute;
    left: -1px;
    top: 9px;
    width: 1px;
    height: 94px;
    background: #cfcfcf;
}
.align-right .row { grid-template-columns: 54px 16px; }
.wrap-text {
    font-size: 15.500px;
    line-height: 12px;
    padding-left: 3px;
}
.wrap-text svg {
    display: inline-block;
    vertical-align: -3px;
}

.g-number .body { padding-left: 12px; }
.g-number .combo { width: 136px; }
.num-mid {
    grid-template-columns: 34px 24px 42px 36px;
    grid-template-rows: 36px;
    font-size: 24px;
    line-height: 36px;
}
.comma {
    height: 36px;
    font-family: "Liberation Serif", serif;
    font-weight: bold;
    font-size: 46px;
    line-height: 10px;
}
.num-dec { grid-template-columns: 36px 42px; }
.dec {
    width: 24px;
    display: grid;
    font-size: 14px;
    line-height: 14px;
    letter-spacing: -.5px;
}
.dec span {
    height: 14px;
    display: flex;
    align-items: center;
    justify-content: flex-end;
}

.cmd {
    display: flex;
    align-items: center;
    gap: 6px;
    padding-left: 18px;
    font-size: 16.900px;
}
.cmd > svg:last-child { margin-top: -2px; }
.cmd .ins { width: 64px; }
.cmd .del { width: 70px; }

.edit-icons {
    width: 74px;
    padding-left: 18px;
}
.edit-icons div {
    display: flex;
    align-items: center;
    gap: 8px;
}
.edit-icons .far { margin-left: 10px; }
.big {
    display: flex;
    flex-direction: column;
    align-items: center;
    padding-top: 6px;
    font-size: 17px;
    line-height: 24px;
}
.big span {
    display: flex;
    align-items: center;
    gap: 5px;
}
.big > svg + span { margin-top: 3px; }
.sort { width: 86px; }
.find { width: 54px; }
.g-addins .big { width: 94px; }
.collapse { margin: 118px 0 0 73px; }

/* Security bar */
.warning {
    height: 45px;
    display: flex;
    align-items: center;
    padding-left: 19px;
    border-radius: 0 0 11px 11px;
    background: #fef8d4;
    font-size: 17px;
}
.warning b {
    width: 184px;
    margin-left: 13px;
    padding-top: 1px;
    font-weight: 600;
    font-size: 17.150px;
}
.warning u {
    width: 370px;
    padding-top: 1px;
    text-underline-offset: 3px;
}
.warning button {
    width: 149px;
    height: 39px;
    padding: 0;
    border: 1px solid #8a8a8a;
    border-radius: 5px;
    background: #fff;
}
.dismiss { margin-left: 1110px; }

/* Formula bar */
.formula {
    flex: none;
    height: 118px;
    display: flex;
    align-items: flex-start;
    padding: 12px 10px 0 9px;
}
.name-box,
.fx-box,
.fx-input {
    height: 35px;
    display: flex;
    align-items: center;
    border: 1px solid #d3d3d3;
    border-radius: 6px;
    background: #fff;
}
.name-box {
    width: 152px;
    justify-content: space-between;
    padding: 0 7px 0 6px;
    font-size: 18px;
}
.dots { margin: 10px 13px 0 13px; }
.fx-box {
    width: 110px;
    padding-left: 9px;
    gap: 15px;
    color: #a8a8a8;
}
.fx-box i {
    color: #222;
    font-family: "Liberation Serif", serif;
    font-size: 28px;
    line-height: 30px;
}
.fx-input {
    flex: 1;
    height: 94px;
    margin-left: 6px;
    align-items: flex-start;
    justify-content: flex-end;
    padding: 10px 6px 0 0;
}

/* Grid */
.sheet {
    flex: none;
    height: 497px;
    overflow: hidden;
    display: flex;
    align-items: flex-start;
}
table {
    width: 1887px;
    table-layout: fixed;
    border-collapse: separate;
    border-spacing: 0;
    color: #000;
    font-size: 19.100px;
}
.c-head { width: 37px; }
.c-a { width: 178px; }
.c-b { width: 412px; }
.c-c { width: 239px; }
.c-d { width: 302px; }
.c-e { width: 110px; }
.c-x { width: 101px; }
.c-end { width: 3px; }
th,
td {
    height: 29px;
    padding: 2px 0 0;
    line-height: 26px;
    text-align: center;
    overflow: hidden;
    border-right: 1px solid #e0e0e0;
    border-bottom: 1px solid #e0e0e0;
}
td { background: #fff; }
th {
    color: #444;
    font-weight: normal;
    font-size: 18px;
    background: #efefef;
}
thead th {
    height: 26px;
    line-height: 23px;
    border-right: 1px solid #d8d8d8;
    border-bottom: 1px solid #a6a6a6;
}
thead .corner {
    background: linear-gradient(135deg, #efefef 55%, #dcdcdc 55%);
    border-color: #efefef;
}
tbody th {
    padding-right: 4px;
    border-right-color: #a6a6a6;
    border-bottom-color: #dcdcdc;
}
td:nth-child(-n+6) {
    border-right-color: #000;
    border-bottom-color: #000;
}
.titles td:nth-child(-n+6) { background: #dce6f1; }
.flag {
    background: linear-gradient(135deg, #0a7a0a 7px, #fff 7px);
}
.name { letter-spacing: .2px; }
.email { letter-spacing: .3px; }
.arabic {
    font-family: "DejaVu Sans", sans-serif;
    font-size: 17px;
}
.money {
    display: flex;
    justify-content: space-between;
    padding: 0 10px 0 12px;
}
.money.short { padding-left: 10px; }
.vscroll {
    width: 28px;
    height: 497px;
    display: flex;
    flex-direction: column;
    align-items: center;
    padding: 6px 0 5px 1px;
    background: #f4f4f4;
}
.vthumb {
    width: 12px;
    height: 39px;
    margin: 8px 0 auto;
    border-radius: 6px;
    background: #6b6b6b;
}

/* Sheet tabs */
.sheet-tabs {
    flex: none;
    height: 48px;
    display: flex;
    align-items: center;
    padding-bottom: 4px;
    border-top: 1px solid #dadada;
}
.st-prev { margin-left: 32px; }
.st-next { margin-left: 40px; }
.sheet-tab {
    width: 70px;
    height: 43px;
    margin: -1px 6px 0 73px;
    padding: 5px 12px 0;
    border-radius: 0 0 8px 8px;
    background: #fff;
    box-shadow: 0 1px 2px rgba(0, 0, 0, .2);
    font-size: 18px;
    text-align: center;
}
.sheet-tab b {
    display: block;
    height: 32px;
    border-bottom: 3px solid #107c41;
    line-height: 29px;
    font-weight: 600;
}
.tab-sep {
    width: 1px;
    height: 28px;
    background: #cfcfcf;
}
.st-add { margin-left: 62px; }
.st-dots { margin: 3px 22px 0 833px; }
.hscroll {
    width: 710px;
    height: 26px;
    display: flex;
    align-items: center;
    padding: 0 7px 0 8px;
    border-radius: 13px;
    background: #f5f5f5;
}
.hthumb {
    width: 599px;
    height: 12px;
    margin: 0 auto 0 8px;
    border-radius: 6px;
    background: #6b6b6b;
}

/* Status bar */
.status {
    flex: none;
    height: 33px;
    display: flex;
    align-items: center;
    border-top: 1px solid #fff;
    background: #f4f4f4;
    font-size: 14.700px;
}
.ready {
    width: 72px;
    padding-left: 13px;
}
.status > svg:nth-child(2) { margin-left: 13px; }
.access {
    width: 1359px;
    margin-left: 3px;
}
.view {
    width: 60px;
    height: 32px;
    display: flex;
    align-items: center;
    justify-content: center;
}
.view.on { background: #dedede; }
.zoom { margin-left: 8px; }
.pct { margin-left: 18px; }

/* Taskbar */
.taskbar {
    flex: none;
    height: 70px;
    display: flex;
    align-items: center;
    border-top: 2px solid #c3b5a8;
    background: linear-gradient(90deg, #f9e5cf 60%, #f8e2d2);
    color: #222;
}
.weather {
    width: 36px;
    margin: 0 353px 0 29px;
    position: relative;
}
.badge {
    position: absolute;
    left: 15px;
    top: -7px;
    width: 24px;
    height: 24px;
    border-radius: 50%;
    background: #c42b1c;
    color: #fff;
    font-size: 15px;
    line-height: 24px;
    text-align: center;
}
.apps {
    height: 68px;
    display: grid;
    grid-template-columns: 44px 92px 40px 92px 42px 90px 44px 98px 47px 110px 37px 104px 40px 94px 40px;
    align-items: center;
    justify-items: center;
}
.apps div {
    position: relative;
}
.run::after {
    content: "";
    position: absolute;
    left: calc(50% - 4px);
    bottom: -11px;
    width: 9px;
    height: 5px;
    border-radius: 3px;
    background: #8a8379;
}
.who {
    position: absolute;
    left: 20px;
    top: -7px;
    width: 24px;
    height: 24px;
    border-radius: 50%;
    background: #a54bb8;
    color: #f4d9f4;
    font-size: 12px;
    line-height: 24px;
    text-align: center;
}
.who.dim { background: #7d45b4; }
.tray-up { margin-left: 135px; }
.lang {
    width: 42px;
    margin-left: 33px;
    font-size: 16.500px;
}
.tray-net { margin-left: 20px; }
.tray-vol { margin-left: 12px; }
.tray-bat { margin-left: 13px; }
.clock {
    display: grid;
    width: 107px;
    font-size: 16.100px;
    line-height: 24px;
    text-align: right;
}

/* Overlay mark */
.watermark {
    position: absolute;
    left: 842px;
    top: 940px;
    width: 230px;
    height: 120px;
    color: #8e8e8e;
    opacity: .2;
    font-weight: bold;
    text-align: center;
}
.wm-ar {
    position: absolute;
    left: -15px;
    top: -3px;
    width: 260px;
    font-family: "DejaVu Sans", sans-serif;
    font-size: 74px;
    line-height: 90px;
    -webkit-text-stroke: 3px #8e8e8e;
    transform: scaleX(.88);
}
.wm-en {
    position: absolute;
    left: 2px;
    top: 75px;
    width: 226px;
    font-family: "Liberation Sans", sans-serif;
    font-size: 38px;
    line-height: 44px;
    text-align: left;
}
```
